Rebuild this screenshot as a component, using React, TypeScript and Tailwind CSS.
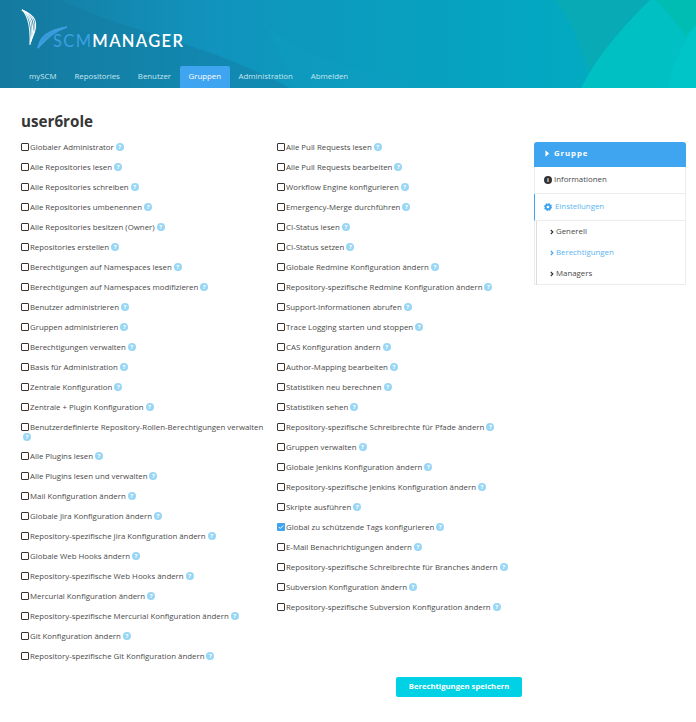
import React from "react";

const left = [
  "Globaler Administrator","Alle Repositories lesen","Alle Repositories schreiben","Alle Repositories umbenennen","Alle Repositories besitzen (Owner)","Repositories erstellen","Berechtigungen auf Namespaces lesen","Berechtigungen auf Namespaces modifizieren","Benutzer administrieren","Gruppen administrieren","Berechtigungen verwalten","Basis für Administration","Zentrale Konfiguration","Zentrale + Plugin Konfiguration","Benutzerdefinierte Repository-Rollen-Berechtigungen verwalten","Alle Plugins lesen","Alle Plugins lesen und verwalten","Mail Konfiguration ändern","Globale Jira Konfiguration ändern","Repository-spezifische Jira Konfiguration ändern","Globale Web Hooks ändern","Repository-spezifische Web Hooks ändern","Mercurial Konfiguration ändern","Repository-spezifische Mercurial Konfiguration ändern","Git Konfiguration ändern","Repository-spezifische Git Konfiguration ändern",
];
const right = [
  "Alle Pull Requests lesen","Alle Pull Requests bearbeiten","Workflow Engine konfigurieren","Emergency-Merge durchführen","CI-Status lesen","CI-Status setzen","Globale Redmine Konfiguration ändern","Repository-spezifische Redmine Konfiguration ändern","Support-Informationen abrufen","Trace Logging starten und stoppen","CAS Konfiguration ändern","Author-Mapping bearbeiten","Statistiken neu berechnen","Statistiken sehen","Repository-spezifische Schreibrechte für Pfade ändern","Gruppen verwalten","Globale Jenkins Konfiguration ändern","Repository-spezifische Jenkins Konfiguration ändern","Skripte ausführen","Global zu schützende Tags konfigurieren","E-Mail Benachrichtigungen ändern","Repository-spezifische Schreibrechte für Branches ändern","Subversion Konfiguration ändern","Repository-spezifische Subversion Konfiguration ändern",
];
const nav = ["mySCM","Repositories","Benutzer","Gruppen","Administration","Abmelden"];

function Help() {
  return (
    <span className="inline-block align-top mt-px ml-[2px] w-[8px] h-[8px] rounded-full bg-[#98d6f5] text-white text-[6px] font-bold leading-[8px] text-center">?</span>
  );
}

function Perm({ label, checked }: { label: string; checked: boolean }) {
  const wrapped = label.startsWith("Benutzerdefinierte");
  return (
    <div className={wrapped ? "mb-[9px] leading-[10px] text-[7.85px] text-[#4a4a4a] pr-[8px]" : "mb-[10px] leading-[10px] text-[7.85px] text-[#4a4a4a] pr-[8px]"}>
      {checked ? (
        <span className="inline-flex align-top mt-px w-[8px] h-[8px] rounded-[1px] bg-[#3fa5f0] mr-[1px] items-center justify-center">
          <svg viewBox="0 0 8 8" className="w-[6px] h-[6px]"><path d="M1 4l2 2 4-4" stroke="#fff" strokeWidth="1.3" fill="none" /></svg>
        </span>
      ) : (
        <span className="inline-block align-top mt-px w-[8px] h-[8px] rounded-[1px] border border-[#3a3230] mr-[1px]" />
      )}
      {label}
      <Help />
    </div>
  );
}

function Logo() {
  const white = [0, 1, 2, 3, 4];
  const blue = [0, 1, 2, 3, 4];
  return (
    <svg viewBox="0 0 50 40" className="w-[50px] h-[40px] shrink-0">
      {white.map((i) => (
        <path key={i} d={`M1 1 C${5 + i * 2} ${4 + i * 0.5} ${10 + i * 2.4} ${14 - i * 0.5} ${9 + i * 0.4} ${36 - i * 1.5}`} stroke="#fff" strokeWidth="1.1" fill="none" opacity={0.95} />
      ))}
      {blue.map((i) => (
        <path key={i} d={`M17 39 C${18 + i * 2.5} ${30 - i * 0.5} ${24 + i * 2} ${21 + i * 0.6} 46 18`} stroke="#3f9fe0" strokeWidth="1.1" fill="none" />
      ))}
    </svg>
  );
}

export default function App() {
  return (
    <div className="w-[696px] h-[722px] bg-white overflow-hidden font-['Open_Sans','Noto_Sans',sans-serif]">
      <header className="relative h-[88px] overflow-hidden bg-[#0f8fb8]">
        <svg className="absolute inset-0" width="696" height="88" viewBox="0 0 696 88">
          <defs>
            <linearGradient id="g" x1="0" y1="0" x2="1" y2="0">
              <stop offset="0" stopColor="#167aa0" />
              <stop offset="0.3" stopColor="#1193bd" />
              <stop offset="0.75" stopColor="#04a6c0" />
              <stop offset="1" stopColor="#00b0c4" />
            </linearGradient>
          </defs>
          <rect width="696" height="88" fill="url(#g)" />
          <path d="M0 0H60C120 30 200 40 290 88H0Z" fill="#137a9f" opacity="0.45" />
          <path d="M245 0C270 30 285 60 295 88H520C500 88 300 90 245 0Z" fill="#0f9fc2" opacity="0.3" />
          <path d="M555 0C575 25 582 50 590 75L581 88H696V0Z" fill="#07aab5" />
          <path d="M581 88C600 50 630 20 650 0H696V88Z" fill="#00c0c4" />
          <path d="M655 0C670 15 680 28 686 37L696 25V0Z" fill="#00bdb4" />
          <path d="M669 88C672 65 682 45 696 25V88Z" fill="#00c5c8" />
        </svg>
        <div className="relative flex items-end h-[66px] pl-[21px] pb-[17px]">
          <Logo />
          <div className="ml-[-18px] text-[16.5px] leading-[16px] tracking-[1.35px] font-['Lato','Open_Sans',sans-serif] font-normal">
            <span className="text-[#3d9fe0]">SCM</span><span className="text-white font-semibold">MANAGER</span>
          </div>
        </div>
        <nav className="relative flex h-[22px] pl-[20px] text-[7.85px] text-[#c5e6f0]">
          {nav.map((n) => (
            <div key={n} className={n === "Gruppen" ? "h-full flex items-center px-[8.5px] bg-[#3fa5f0] text-white rounded-t-[2px]" : "h-full flex items-center px-[9px]"}>{n}</div>
          ))}
        </nav>
      </header>

      <main className="flex pl-[21px] pt-[22px]">
        <div className="w-[513px]">
          <h1 className="text-[15.2px] leading-[22px] font-bold text-[#363636] mb-[10px]">user6role</h1>
          <div className="flex">
            <div className="w-[256px]">{left.map((l) => <Perm key={l} label={l} checked={false} />)}</div>
            <div className="w-[257px]">{right.map((l) => <Perm key={l} label={l} checked={l.startsWith("Global zu")} />)}</div>
          </div>
          <div className="flex justify-end pr-[12px] mt-[6px]">
            <button className="w-[126px] h-[20px] rounded-[2px] bg-[#00d1e4] text-white text-[7.7px] font-bold">Berechtigungen speichern</button>
          </div>
        </div>

        <aside className="w-[152px] h-[143px] mt-[32px] text-[7.85px] text-[#4a4a4a] border-x border-b border-[#ededed] rounded-t-[2px]">
          <div className="h-[25px] pb-[2px] -mx-px bg-[#3fa5f0] rounded-t-[3px] text-white font-bold tracking-[0.9px] flex items-center pl-[11px] gap-[4px]">
            <svg viewBox="0 0 6 8" className="w-[5px] h-[7px]"><path d="M0.5 0L5 4L0.5 8Z" fill="#fff" /></svg>
            Gruppe
          </div>
          <div className="h-[27px] border-b border-[#ededed] flex items-center pl-[9px] gap-[2px]">
            <span className="w-[8px] h-[8px] rounded-full bg-[#333] text-white text-[6px] font-bold leading-[8px] text-center">i</span>
            Informationen
          </div>
          <div className="h-[27px] -ml-px border-l border-l-[#3fa5f0] border-b border-b-[#ededed] flex items-center pl-[9px] gap-[3px] text-[#5bb4f2]">
            <svg viewBox="0 0 24 24" className="w-[8px] h-[8px]"><circle cx="12" cy="12" r="7" fill="none" stroke="#3fa5f0" strokeWidth="6" /><circle cx="12" cy="12" r="10" fill="none" stroke="#3fa5f0" strokeWidth="4" strokeDasharray="4 3.85" /></svg>
            Einstellungen
          </div>
          <div className="ml-[1px] border-l border-[#dcdcdc] h-[64px]">
            {["Generell", "Berechtigungen", "Managers"].map((s) => (
              <div key={s} className={s === "Berechtigungen" ? "h-[21px] flex items-center pl-[13px] gap-[2px] text-[#5bb4f2]" : "h-[21px] flex items-center pl-[13px] gap-[2px]"}>
                <svg viewBox="0 0 6 8" className="w-[4px] h-[6px]"><path d="M1.2 1L4.2 4L1.2 7" stroke={s === "Berechtigungen" ? "#3fa5f0" : "#333"} strokeWidth="1.8" fill="none" /></svg>
                {s}
              </div>
            ))}
          </div>
        </aside>
      </main>
    </div>
  );
}
